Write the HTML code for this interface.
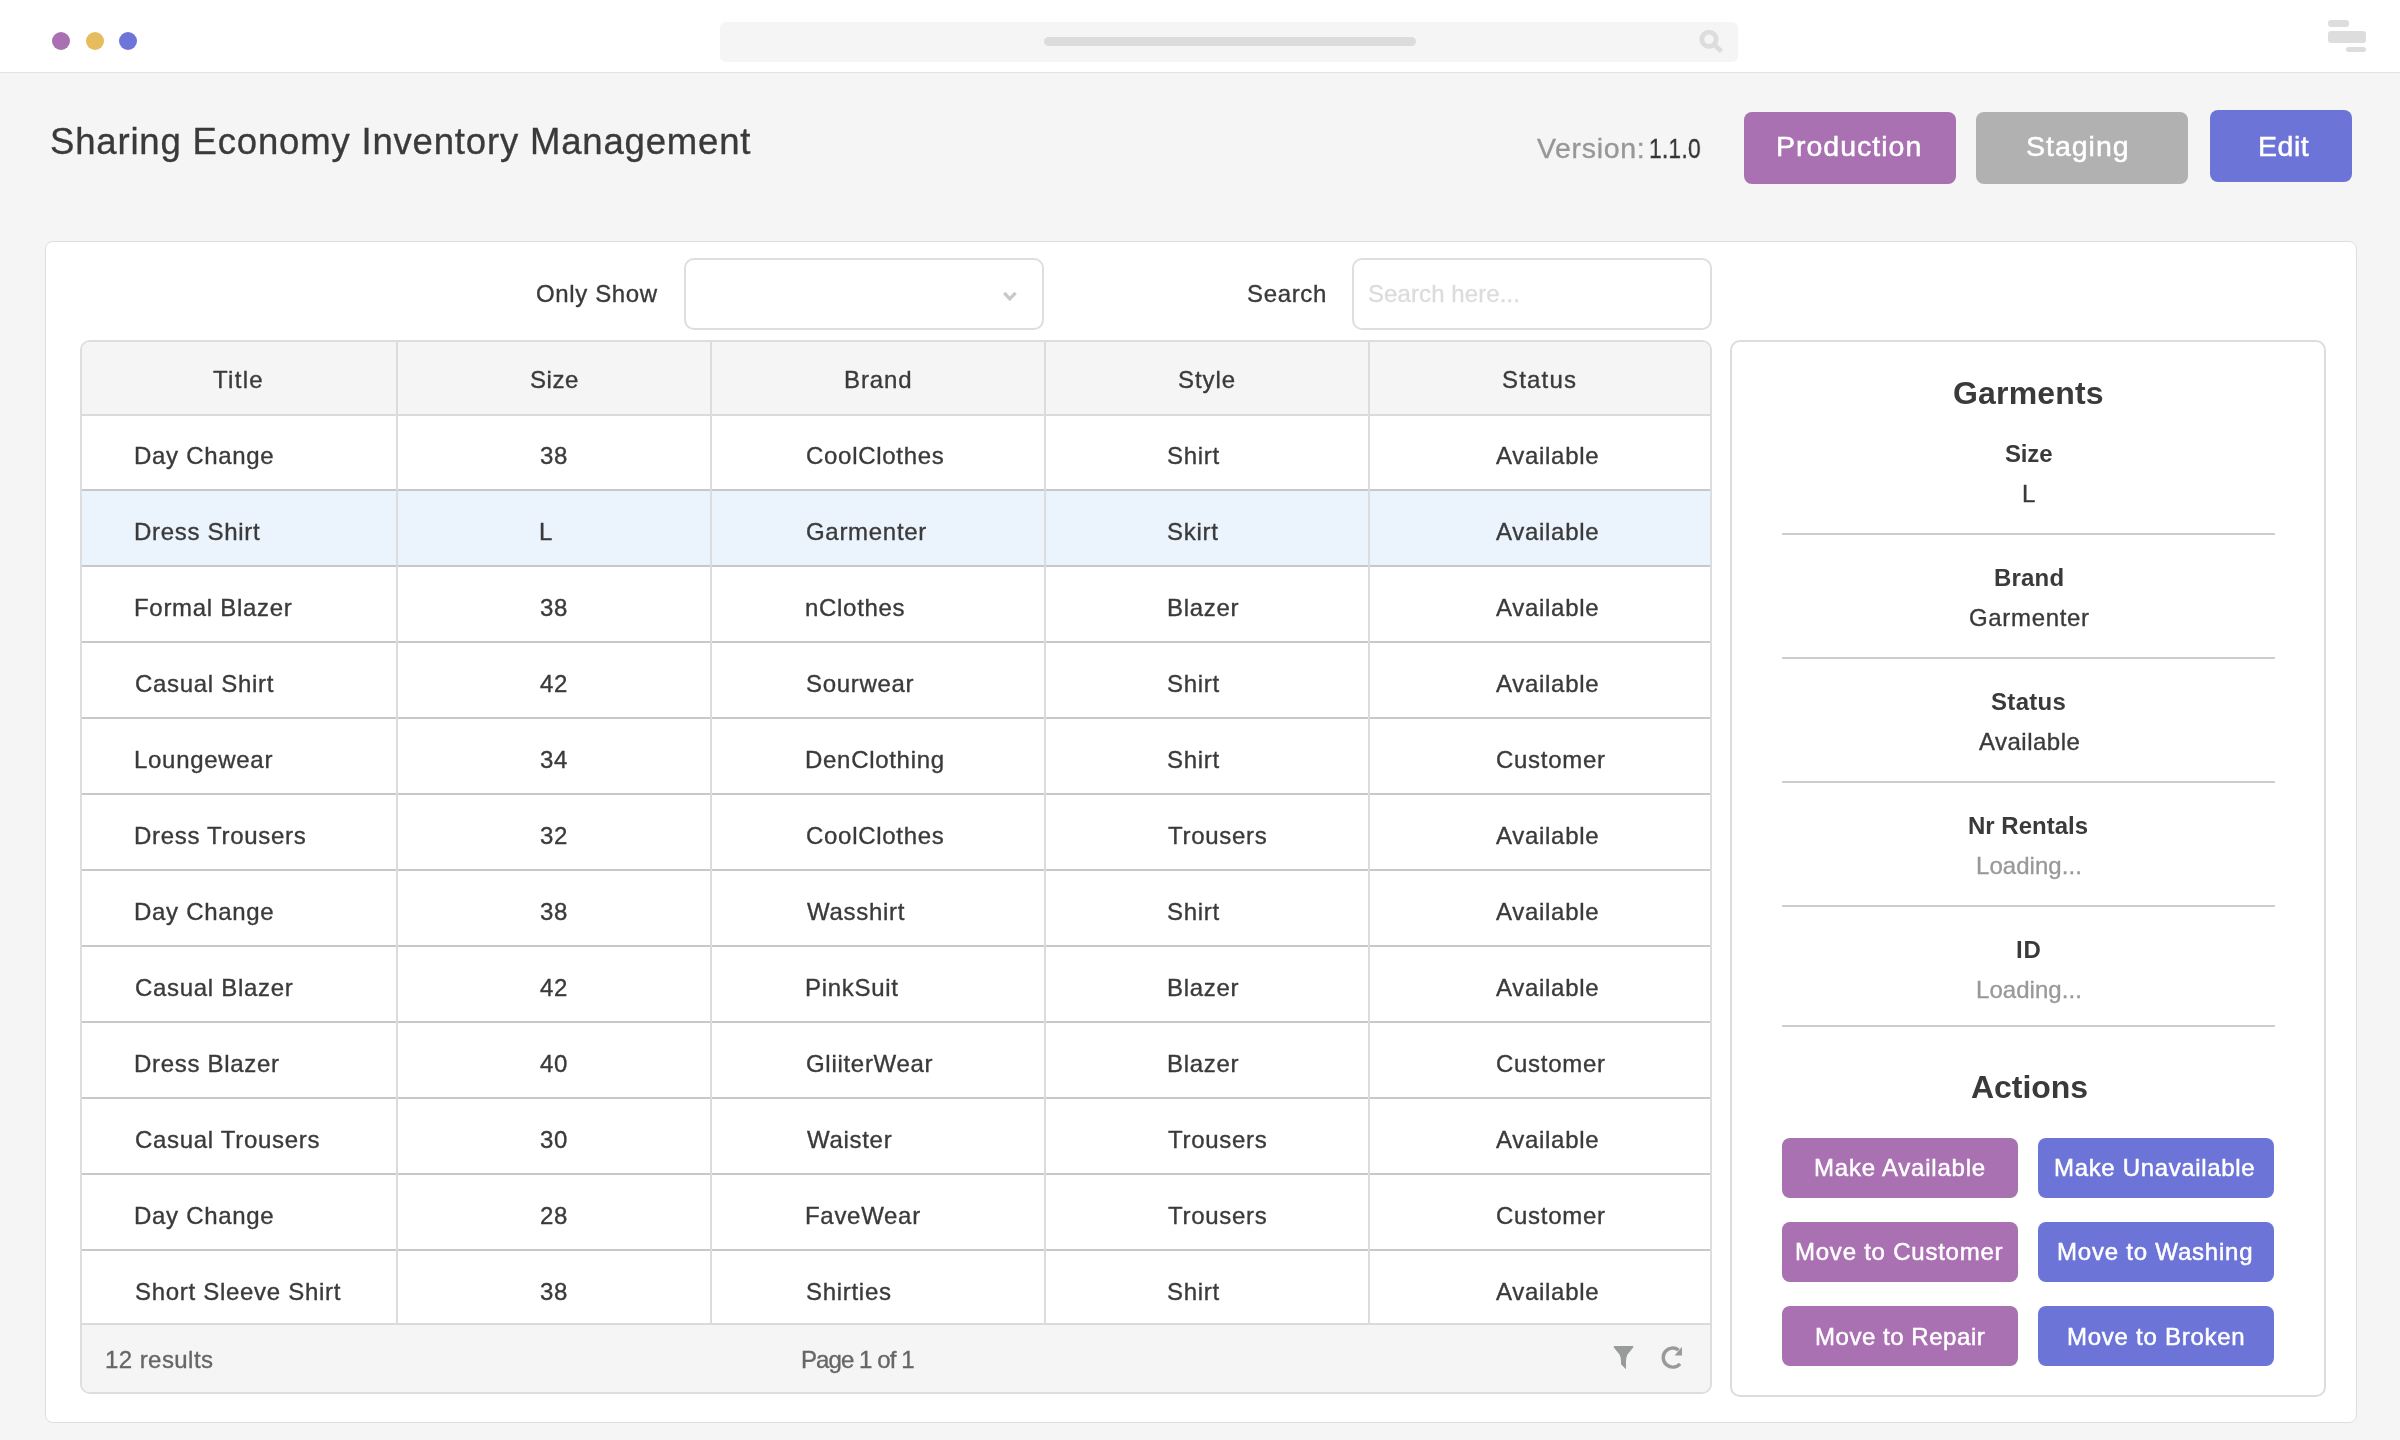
<!DOCTYPE html>
<html><head><meta charset="utf-8"><title>Sharing Economy Inventory Management</title>
<style>
html,body{margin:0;padding:0;}
body{width:2400px;height:1440px;overflow:hidden;background:#f5f5f5;position:relative;font-family:"Liberation Sans",sans-serif;}
.a{position:absolute;box-sizing:border-box;}
.t{position:absolute;white-space:nowrap;line-height:normal;will-change:transform;font-family:"Liberation Sans",sans-serif;}
.mk{display:inline-block;width:0;height:0;vertical-align:baseline;}
.topbar{left:0;top:0;width:2400px;height:72px;background:#fff;}
.hline{left:0;top:72px;width:2400px;height:1px;background:#e3e3e3;}
.dot{width:18px;height:18px;border-radius:50%;top:32px;}
.addr{left:720px;top:22px;width:1018px;height:40px;background:#f5f5f5;border-radius:6px;}
.addrline{left:1044px;top:37px;width:372px;height:9px;background:#dcdcdc;border-radius:5px;}
.btn{border-radius:8px;}
.card{left:45px;top:241px;width:2312px;height:1182px;background:#fff;border:1px solid #dedede;border-radius:8px;}
.inp{background:#fff;border:2px solid #dedede;border-radius:10px;}
.tbl{left:80px;top:340px;width:1632px;height:1054px;border:2px solid #dddddd;border-radius:10px;overflow:hidden;background:#fff;}
.panel{left:1730px;top:340px;width:596px;height:1057px;border:2px solid #dddddd;border-radius:10px;background:#fff;}
.sep{left:1782px;width:493px;height:2px;background:#cdcdcd;}
.abtn{width:236px;height:60px;border-radius:8px;}

</style></head><body>
<div class="a topbar"></div><div class="a hline"></div>
<div class="a dot" style="left:52px;background:#a970b2"></div>
<div class="a dot" style="left:85.6px;background:#e5bd5f"></div>
<div class="a dot" style="left:119px;background:#6e74d8"></div>
<div class="a addr"></div><div class="a addrline"></div>
<svg class="a" style="left:1695px;top:26px" width="32" height="32" viewBox="1695 26 32 32"><circle cx="1709" cy="39.3" r="7.2" fill="none" stroke="#dddddd" stroke-width="4.8"/><line x1="1713.5" y1="44" x2="1721.5" y2="51.5" stroke="#dddddd" stroke-width="4.6"/></svg>
<div class="a" style="left:2328px;top:20px;width:21px;height:6.6px;border-radius:3.3px;background:#dddddd"></div>
<div class="a" style="left:2328px;top:30.7px;width:38.3px;height:12px;border-radius:3px;background:#dddddd"></div>
<div class="a" style="left:2345.8px;top:46.8px;width:20.5px;height:5px;border-radius:2.5px;background:#dddddd"></div>
<div class="a btn" style="left:1744px;top:112px;width:212px;height:72px;background:#a970b2"></div>
<div class="a btn" style="left:1976px;top:112px;width:212px;height:72px;background:#b1b1b2"></div>
<div class="a btn" style="left:2210px;top:110px;width:142px;height:72px;background:#6c74d8"></div>
<div class="a card"></div>
<div class="a inp" style="left:684px;top:258px;width:360px;height:72px"></div>
<svg class="a" style="left:1000px;top:288px" width="20" height="16" viewBox="1000 288 20 16"><polyline points="1004.2,292.8 1009.8,298.8 1015.6,292.8" fill="none" stroke="#c9c9cc" stroke-width="3.3"/></svg>
<div class="a inp" style="left:1352px;top:258px;width:360px;height:72px"></div>
<div class="a tbl"><div class="a" style="left:0;top:0;width:1628px;height:72px;background:#f5f5f5"></div><div class="a" style="left:0;top:72px;width:1628px;height:2px;background:#dadada"></div><div class="a" style="left:0;top:149px;width:1628px;height:74px;background:#ebf3fd"></div><div class="a" style="left:0;top:147px;width:1628px;height:2px;background:#c8c8ca"></div><div class="a" style="left:0;top:223px;width:1628px;height:2px;background:#c8c8ca"></div><div class="a" style="left:0;top:299px;width:1628px;height:2px;background:#c8c8ca"></div><div class="a" style="left:0;top:375px;width:1628px;height:2px;background:#c8c8ca"></div><div class="a" style="left:0;top:451px;width:1628px;height:2px;background:#c8c8ca"></div><div class="a" style="left:0;top:527px;width:1628px;height:2px;background:#c8c8ca"></div><div class="a" style="left:0;top:603px;width:1628px;height:2px;background:#c8c8ca"></div><div class="a" style="left:0;top:679px;width:1628px;height:2px;background:#c8c8ca"></div><div class="a" style="left:0;top:755px;width:1628px;height:2px;background:#c8c8ca"></div><div class="a" style="left:0;top:831px;width:1628px;height:2px;background:#c8c8ca"></div><div class="a" style="left:0;top:907px;width:1628px;height:2px;background:#c8c8ca"></div><div class="a" style="left:0;top:981px;width:1628px;height:69px;background:#f5f5f5;border-top:2px solid #dadada"></div><div class="a" style="left:314px;top:0;width:2px;height:981px;background:#dcdcdc"></div><div class="a" style="left:628px;top:0;width:2px;height:981px;background:#dcdcdc"></div><div class="a" style="left:962px;top:0;width:2px;height:981px;background:#dcdcdc"></div><div class="a" style="left:1286px;top:0;width:2px;height:981px;background:#dcdcdc"></div></div>
<svg class="a" style="left:1610px;top:1343px" width="80" height="30" viewBox="1610 1343 80 30"><path d="M1613.8,1346 L1633.2,1346 L1633.2,1347.6 L1627.5,1354.5 Q1626,1357 1626,1361 L1626,1369.2 L1621,1364.2 L1621,1361 Q1621,1357 1619.5,1354.5 L1613.8,1347.6 Z" fill="#999a9a"/><path d="M1678.6,1350.0 A9.55,9.55 0 1 0 1680.0,1363.8" fill="none" stroke="#999a9a" stroke-width="3.4"/><path d="M1682,1346.8 L1682,1355.5 L1674.6,1355.5 Z" fill="#999a9a"/></svg>
<div class="a panel"></div>
<div class="a sep" style="top:533px"></div>
<div class="a sep" style="top:657px"></div>
<div class="a sep" style="top:781px"></div>
<div class="a sep" style="top:905px"></div>
<div class="a sep" style="top:1025px"></div>
<div class="a abtn" style="left:1782px;top:1138px;background:#a970b2"></div>
<div class="a abtn" style="left:2038px;top:1138px;background:#6c74d8"></div>
<div class="a abtn" style="left:1782px;top:1222px;background:#a970b2"></div>
<div class="a abtn" style="left:2038px;top:1222px;background:#6c74d8"></div>
<div class="a abtn" style="left:1782px;top:1306px;background:#a970b2"></div>
<div class="a abtn" style="left:2038px;top:1306px;background:#6c74d8"></div>
<div class="t" id="title" style="left:49.63px;top:120.75px;font-size:36.5px;color:#3a3a3a;-webkit-text-stroke:0.35px #3a3a3a;letter-spacing:0.825px;">Sharing Economy Inventory Management</div>
<div class="t" id="ver1" style="left:1537.15px;top:131.60px;font-size:28.5px;color:#979797;-webkit-text-stroke:0.35px #979797;letter-spacing:0.663px;">Version:</div>
<div class="t" id="ver2" style="left:1648.71px;top:131.60px;font-size:28.5px;color:#333333;-webkit-text-stroke:0.35px #333333;letter-spacing:0.300px;transform:scaleX(0.80);transform-origin:0 0;">1.1.0</div>
<div class="t" id="bprod" style="left:1775.54px;top:129.82px;font-size:28.5px;color:#ffffff;letter-spacing:1.008px;-webkit-text-stroke:0.5px #ffffff;">Production</div>
<div class="t" id="bstag" style="left:2026.19px;top:130.10px;font-size:28.5px;color:#ffffff;letter-spacing:0.994px;-webkit-text-stroke:0.5px #ffffff;">Staging</div>
<div class="t" id="bedit" style="left:2257.54px;top:129.71px;font-size:28.5px;color:#ffffff;letter-spacing:0.531px;-webkit-text-stroke:0.5px #ffffff;">Edit</div>
<div class="t" id="onlyshow" style="left:536.00px;top:279.72px;font-size:24px;color:#3a3a3a;-webkit-text-stroke:0.35px #3a3a3a;letter-spacing:0.628px;">Only Show</div>
<div class="t" id="searchlbl" style="left:1246.61px;top:280.01px;font-size:24px;color:#3a3a3a;-webkit-text-stroke:0.35px #3a3a3a;letter-spacing:0.647px;">Search</div>
<div class="t" id="placeholder" style="left:1367.75px;top:279.81px;font-size:24px;color:#dcdcdc;-webkit-text-stroke:0.35px #dcdcdc;letter-spacing:0.090px;">Search here...</div>
<div class="t" id="h_title" style="left:213.43px;top:365.81px;font-size:24px;color:#3a3a3a;-webkit-text-stroke:0.35px #3a3a3a;letter-spacing:1.312px;">Title</div>
<div class="t" id="h_size" style="left:529.61px;top:365.81px;font-size:24px;color:#3a3a3a;-webkit-text-stroke:0.35px #3a3a3a;letter-spacing:0.520px;">Size</div>
<div class="t" id="h_brand" style="left:844.20px;top:365.81px;font-size:24px;color:#3a3a3a;-webkit-text-stroke:0.35px #3a3a3a;letter-spacing:0.897px;">Brand</div>
<div class="t" id="h_style" style="left:1177.61px;top:365.81px;font-size:24px;color:#3a3a3a;-webkit-text-stroke:0.35px #3a3a3a;letter-spacing:0.936px;">Style</div>
<div class="t" id="h_status" style="left:1501.61px;top:365.81px;font-size:24px;color:#3a3a3a;-webkit-text-stroke:0.35px #3a3a3a;letter-spacing:1.173px;">Status</div>
<div class="t" id="r0c0" style="left:134.19px;top:441.76px;font-size:24px;color:#3a3a3a;-webkit-text-stroke:0.35px #3a3a3a;letter-spacing:0.700px;">Day Change</div>
<div class="t" id="r0c1" style="left:539.81px;top:441.76px;font-size:24px;color:#3a3a3a;-webkit-text-stroke:0.35px #3a3a3a;letter-spacing:0.700px;">38</div>
<div class="t" id="r0c2" style="left:806.22px;top:441.76px;font-size:24px;color:#3a3a3a;-webkit-text-stroke:0.35px #3a3a3a;letter-spacing:0.700px;">CoolClothes</div>
<div class="t" id="r0c3" style="left:1167.11px;top:441.76px;font-size:24px;color:#3a3a3a;-webkit-text-stroke:0.35px #3a3a3a;letter-spacing:0.700px;">Shirt</div>
<div class="t" id="r0c4" style="left:1496.40px;top:441.76px;font-size:24px;color:#3a3a3a;-webkit-text-stroke:0.35px #3a3a3a;letter-spacing:0.700px;">Available</div>
<div class="t" id="r1c0" style="left:134.20px;top:517.76px;font-size:24px;color:#3a3a3a;-webkit-text-stroke:0.35px #3a3a3a;letter-spacing:0.700px;">Dress Shirt</div>
<div class="t" id="r1c1" style="left:539.20px;top:517.76px;font-size:24px;color:#3a3a3a;-webkit-text-stroke:0.35px #3a3a3a;letter-spacing:0.700px;">L</div>
<div class="t" id="r1c2" style="left:806.00px;top:517.76px;font-size:24px;color:#3a3a3a;-webkit-text-stroke:0.35px #3a3a3a;letter-spacing:0.700px;">Garmenter</div>
<div class="t" id="r1c3" style="left:1167.10px;top:517.76px;font-size:24px;color:#3a3a3a;-webkit-text-stroke:0.35px #3a3a3a;letter-spacing:0.700px;">Skirt</div>
<div class="t" id="r1c4" style="left:1496.40px;top:517.76px;font-size:24px;color:#3a3a3a;-webkit-text-stroke:0.35px #3a3a3a;letter-spacing:0.700px;">Available</div>
<div class="t" id="r2c0" style="left:134.19px;top:593.76px;font-size:24px;color:#3a3a3a;-webkit-text-stroke:0.35px #3a3a3a;letter-spacing:0.700px;">Formal Blazer</div>
<div class="t" id="r2c1" style="left:539.81px;top:593.76px;font-size:24px;color:#3a3a3a;-webkit-text-stroke:0.35px #3a3a3a;letter-spacing:0.700px;">38</div>
<div class="t" id="r2c2" style="left:805.16px;top:593.76px;font-size:24px;color:#3a3a3a;-webkit-text-stroke:0.35px #3a3a3a;letter-spacing:0.700px;">nClothes</div>
<div class="t" id="r2c3" style="left:1166.69px;top:593.76px;font-size:24px;color:#3a3a3a;-webkit-text-stroke:0.35px #3a3a3a;letter-spacing:0.700px;">Blazer</div>
<div class="t" id="r2c4" style="left:1496.40px;top:593.76px;font-size:24px;color:#3a3a3a;-webkit-text-stroke:0.35px #3a3a3a;letter-spacing:0.700px;">Available</div>
<div class="t" id="r3c0" style="left:135.22px;top:669.76px;font-size:24px;color:#3a3a3a;-webkit-text-stroke:0.35px #3a3a3a;letter-spacing:0.700px;">Casual Shirt</div>
<div class="t" id="r3c1" style="left:540.43px;top:669.76px;font-size:24px;color:#3a3a3a;-webkit-text-stroke:0.35px #3a3a3a;letter-spacing:0.700px;">42</div>
<div class="t" id="r3c2" style="left:805.61px;top:669.76px;font-size:24px;color:#3a3a3a;-webkit-text-stroke:0.35px #3a3a3a;letter-spacing:0.700px;">Sourwear</div>
<div class="t" id="r3c3" style="left:1167.11px;top:669.76px;font-size:24px;color:#3a3a3a;-webkit-text-stroke:0.35px #3a3a3a;letter-spacing:0.700px;">Shirt</div>
<div class="t" id="r3c4" style="left:1496.40px;top:669.76px;font-size:24px;color:#3a3a3a;-webkit-text-stroke:0.35px #3a3a3a;letter-spacing:0.700px;">Available</div>
<div class="t" id="r4c0" style="left:134.19px;top:745.76px;font-size:24px;color:#3a3a3a;-webkit-text-stroke:0.35px #3a3a3a;letter-spacing:0.700px;">Loungewear</div>
<div class="t" id="r4c1" style="left:539.81px;top:745.76px;font-size:24px;color:#3a3a3a;-webkit-text-stroke:0.35px #3a3a3a;letter-spacing:0.700px;">34</div>
<div class="t" id="r4c2" style="left:805.19px;top:745.76px;font-size:24px;color:#3a3a3a;-webkit-text-stroke:0.35px #3a3a3a;letter-spacing:0.700px;">DenClothing</div>
<div class="t" id="r4c3" style="left:1167.11px;top:745.76px;font-size:24px;color:#3a3a3a;-webkit-text-stroke:0.35px #3a3a3a;letter-spacing:0.700px;">Shirt</div>
<div class="t" id="r4c4" style="left:1495.62px;top:745.76px;font-size:24px;color:#3a3a3a;-webkit-text-stroke:0.35px #3a3a3a;letter-spacing:0.700px;">Customer</div>
<div class="t" id="r5c0" style="left:134.19px;top:821.76px;font-size:24px;color:#3a3a3a;-webkit-text-stroke:0.35px #3a3a3a;letter-spacing:0.700px;">Dress Trousers</div>
<div class="t" id="r5c1" style="left:539.81px;top:821.76px;font-size:24px;color:#3a3a3a;-webkit-text-stroke:0.35px #3a3a3a;letter-spacing:0.700px;">32</div>
<div class="t" id="r5c2" style="left:806.22px;top:821.76px;font-size:24px;color:#3a3a3a;-webkit-text-stroke:0.35px #3a3a3a;letter-spacing:0.700px;">CoolClothes</div>
<div class="t" id="r5c3" style="left:1167.93px;top:821.76px;font-size:24px;color:#3a3a3a;-webkit-text-stroke:0.35px #3a3a3a;letter-spacing:0.700px;">Trousers</div>
<div class="t" id="r5c4" style="left:1496.40px;top:821.76px;font-size:24px;color:#3a3a3a;-webkit-text-stroke:0.35px #3a3a3a;letter-spacing:0.700px;">Available</div>
<div class="t" id="r6c0" style="left:134.19px;top:897.76px;font-size:24px;color:#3a3a3a;-webkit-text-stroke:0.35px #3a3a3a;letter-spacing:0.700px;">Day Change</div>
<div class="t" id="r6c1" style="left:539.81px;top:897.76px;font-size:24px;color:#3a3a3a;-webkit-text-stroke:0.35px #3a3a3a;letter-spacing:0.700px;">38</div>
<div class="t" id="r6c2" style="left:807.00px;top:897.76px;font-size:24px;color:#3a3a3a;-webkit-text-stroke:0.35px #3a3a3a;letter-spacing:0.700px;">Wasshirt</div>
<div class="t" id="r6c3" style="left:1167.11px;top:897.76px;font-size:24px;color:#3a3a3a;-webkit-text-stroke:0.35px #3a3a3a;letter-spacing:0.700px;">Shirt</div>
<div class="t" id="r6c4" style="left:1496.40px;top:897.76px;font-size:24px;color:#3a3a3a;-webkit-text-stroke:0.35px #3a3a3a;letter-spacing:0.700px;">Available</div>
<div class="t" id="r7c0" style="left:135.22px;top:973.76px;font-size:24px;color:#3a3a3a;-webkit-text-stroke:0.35px #3a3a3a;letter-spacing:0.700px;">Casual Blazer</div>
<div class="t" id="r7c1" style="left:540.43px;top:973.76px;font-size:24px;color:#3a3a3a;-webkit-text-stroke:0.35px #3a3a3a;letter-spacing:0.700px;">42</div>
<div class="t" id="r7c2" style="left:805.19px;top:973.76px;font-size:24px;color:#3a3a3a;-webkit-text-stroke:0.35px #3a3a3a;letter-spacing:0.700px;">PinkSuit</div>
<div class="t" id="r7c3" style="left:1166.69px;top:973.76px;font-size:24px;color:#3a3a3a;-webkit-text-stroke:0.35px #3a3a3a;letter-spacing:0.700px;">Blazer</div>
<div class="t" id="r7c4" style="left:1496.40px;top:973.76px;font-size:24px;color:#3a3a3a;-webkit-text-stroke:0.35px #3a3a3a;letter-spacing:0.700px;">Available</div>
<div class="t" id="r8c0" style="left:134.19px;top:1049.76px;font-size:24px;color:#3a3a3a;-webkit-text-stroke:0.35px #3a3a3a;letter-spacing:0.700px;">Dress Blazer</div>
<div class="t" id="r8c1" style="left:540.43px;top:1049.76px;font-size:24px;color:#3a3a3a;-webkit-text-stroke:0.35px #3a3a3a;letter-spacing:0.700px;">40</div>
<div class="t" id="r8c2" style="left:806.00px;top:1049.76px;font-size:24px;color:#3a3a3a;-webkit-text-stroke:0.35px #3a3a3a;letter-spacing:0.700px;">GliiterWear</div>
<div class="t" id="r8c3" style="left:1166.69px;top:1049.76px;font-size:24px;color:#3a3a3a;-webkit-text-stroke:0.35px #3a3a3a;letter-spacing:0.700px;">Blazer</div>
<div class="t" id="r8c4" style="left:1495.62px;top:1049.76px;font-size:24px;color:#3a3a3a;-webkit-text-stroke:0.35px #3a3a3a;letter-spacing:0.700px;">Customer</div>
<div class="t" id="r9c0" style="left:135.22px;top:1125.76px;font-size:24px;color:#3a3a3a;-webkit-text-stroke:0.35px #3a3a3a;letter-spacing:0.700px;">Casual Trousers</div>
<div class="t" id="r9c1" style="left:539.81px;top:1125.76px;font-size:24px;color:#3a3a3a;-webkit-text-stroke:0.35px #3a3a3a;letter-spacing:0.700px;">30</div>
<div class="t" id="r9c2" style="left:807.00px;top:1125.76px;font-size:24px;color:#3a3a3a;-webkit-text-stroke:0.35px #3a3a3a;letter-spacing:0.700px;">Waister</div>
<div class="t" id="r9c3" style="left:1167.93px;top:1125.76px;font-size:24px;color:#3a3a3a;-webkit-text-stroke:0.35px #3a3a3a;letter-spacing:0.700px;">Trousers</div>
<div class="t" id="r9c4" style="left:1496.40px;top:1125.76px;font-size:24px;color:#3a3a3a;-webkit-text-stroke:0.35px #3a3a3a;letter-spacing:0.700px;">Available</div>
<div class="t" id="r10c0" style="left:134.19px;top:1201.76px;font-size:24px;color:#3a3a3a;-webkit-text-stroke:0.35px #3a3a3a;letter-spacing:0.700px;">Day Change</div>
<div class="t" id="r10c1" style="left:540.00px;top:1201.76px;font-size:24px;color:#3a3a3a;-webkit-text-stroke:0.35px #3a3a3a;letter-spacing:0.700px;">28</div>
<div class="t" id="r10c2" style="left:805.19px;top:1201.76px;font-size:24px;color:#3a3a3a;-webkit-text-stroke:0.35px #3a3a3a;letter-spacing:0.700px;">FaveWear</div>
<div class="t" id="r10c3" style="left:1167.93px;top:1201.76px;font-size:24px;color:#3a3a3a;-webkit-text-stroke:0.35px #3a3a3a;letter-spacing:0.700px;">Trousers</div>
<div class="t" id="r10c4" style="left:1495.62px;top:1201.76px;font-size:24px;color:#3a3a3a;-webkit-text-stroke:0.35px #3a3a3a;letter-spacing:0.700px;">Customer</div>
<div class="t" id="r11c0" style="left:134.61px;top:1277.76px;font-size:24px;color:#3a3a3a;-webkit-text-stroke:0.35px #3a3a3a;letter-spacing:0.700px;">Short Sleeve Shirt</div>
<div class="t" id="r11c1" style="left:539.81px;top:1277.76px;font-size:24px;color:#3a3a3a;-webkit-text-stroke:0.35px #3a3a3a;letter-spacing:0.700px;">38</div>
<div class="t" id="r11c2" style="left:805.61px;top:1277.76px;font-size:24px;color:#3a3a3a;-webkit-text-stroke:0.35px #3a3a3a;letter-spacing:0.700px;">Shirties</div>
<div class="t" id="r11c3" style="left:1167.11px;top:1277.76px;font-size:24px;color:#3a3a3a;-webkit-text-stroke:0.35px #3a3a3a;letter-spacing:0.700px;">Shirt</div>
<div class="t" id="r11c4" style="left:1496.40px;top:1277.76px;font-size:24px;color:#3a3a3a;-webkit-text-stroke:0.35px #3a3a3a;letter-spacing:0.700px;">Available</div>
<div class="t" id="results" style="left:105.37px;top:1345.81px;font-size:24px;color:#666666;-webkit-text-stroke:0.35px #666666;letter-spacing:0.438px;">12 results</div>
<div class="t" id="page" style="left:801.29px;top:1345.81px;font-size:24px;color:#666666;-webkit-text-stroke:0.35px #666666;letter-spacing:-0.923px;">Page 1 of 1</div>
<div class="t" id="garments" style="left:1953.30px;top:375.01px;font-size:32px;color:#3a3a3a;font-weight:700;letter-spacing:0.163px;">Garments</div>
<div class="t" id="pl0" style="left:2004.56px;top:439.90px;font-size:24px;color:#3a3a3a;font-weight:700;letter-spacing:-0.162px;">Size</div>
<div class="t" id="pv0" style="left:2022.19px;top:480.01px;font-size:24px;color:#3a3a3a;-webkit-text-stroke:0.35px #3a3a3a;">L</div>
<div class="t" id="pl1" style="left:1993.98px;top:564.40px;font-size:24px;color:#3a3a3a;font-weight:700;letter-spacing:0.192px;">Brand</div>
<div class="t" id="pv1" style="left:1969.00px;top:603.90px;font-size:24px;color:#3a3a3a;-webkit-text-stroke:0.35px #3a3a3a;letter-spacing:0.661px;">Garmenter</div>
<div class="t" id="pl2" style="left:1990.56px;top:688.31px;font-size:24px;color:#3a3a3a;font-weight:700;letter-spacing:0.313px;">Status</div>
<div class="t" id="pv2" style="left:1979.00px;top:727.90px;font-size:24px;color:#3a3a3a;-webkit-text-stroke:0.35px #3a3a3a;letter-spacing:0.479px;">Available</div>
<div class="t" id="pl3" style="left:1967.98px;top:811.81px;font-size:24px;color:#3a3a3a;font-weight:700;letter-spacing:0.009px;">Nr Rentals</div>
<div class="t" id="pv3" style="left:1976.26px;top:851.90px;font-size:24px;color:#999999;-webkit-text-stroke:0.35px #999999;letter-spacing:0.050px;">Loading...</div>
<div class="t" id="pl4" style="left:2015.98px;top:935.61px;font-size:24px;color:#3a3a3a;font-weight:700;letter-spacing:0.836px;">ID</div>
<div class="t" id="pv4" style="left:1976.26px;top:976.01px;font-size:24px;color:#999999;-webkit-text-stroke:0.35px #999999;letter-spacing:0.050px;">Loading...</div>
<div class="t" id="actions" style="left:1971.00px;top:1069.31px;font-size:32px;color:#3a3a3a;font-weight:700;letter-spacing:-0.043px;">Actions</div>
<div class="t" id="ab0" style="left:1813.58px;top:1154.01px;font-size:24px;color:#ffffff;letter-spacing:0.779px;-webkit-text-stroke:0.5px #ffffff;">Make Available</div>
<div class="t" id="ab1" style="left:2053.59px;top:1154.01px;font-size:24px;color:#ffffff;letter-spacing:0.660px;-webkit-text-stroke:0.5px #ffffff;">Make Unavailable</div>
<div class="t" id="ab2" style="left:1794.58px;top:1238.41px;font-size:24px;color:#ffffff;letter-spacing:0.766px;-webkit-text-stroke:0.5px #ffffff;">Move to Customer</div>
<div class="t" id="ab3" style="left:2056.59px;top:1238.41px;font-size:24px;color:#ffffff;letter-spacing:0.789px;-webkit-text-stroke:0.5px #ffffff;">Move to Washing</div>
<div class="t" id="ab4" style="left:1814.58px;top:1322.51px;font-size:24px;color:#ffffff;letter-spacing:0.540px;-webkit-text-stroke:0.5px #ffffff;">Move to Repair</div>
<div class="t" id="ab5" style="left:2066.59px;top:1322.51px;font-size:24px;color:#ffffff;letter-spacing:0.735px;-webkit-text-stroke:0.5px #ffffff;">Move to Broken</div>
</body></html>
